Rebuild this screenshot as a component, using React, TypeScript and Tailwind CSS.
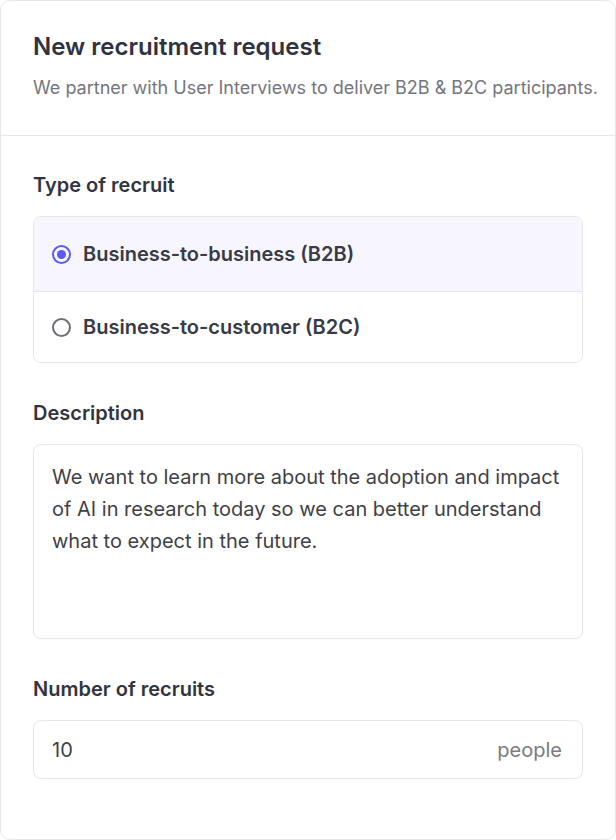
import { useState } from 'react'

const options = [
  { id: 'b2b', label: 'Business-to-business (B2B)' },
  { id: 'b2c', label: 'Business-to-customer (B2C)' },
]

function Radio({ checked }: { checked: boolean }) {
  if (checked) {
    return (
      <span className="flex h-[19px] w-[19px] shrink-0 items-center justify-center rounded-full border-2 border-[#5b5af6]">
        <span className="h-[9px] w-[9px] rounded-full bg-[#5b5af6]" />
      </span>
    )
  }
  return <span className="h-[19px] w-[19px] shrink-0 rounded-full border-2 border-[#6e6e76]" />
}

export default function App() {
  const [type, setType] = useState('b2b')

  return (
    <div className="min-h-screen bg-white font-['Inter',sans-serif] text-[#32343f]">
      <div className="w-[616px] h-[840px] rounded-[10px] border border-[#e6e6eb] bg-white flex flex-col">
        <header className="border-b border-[#e6e6eb] pl-[32px] pr-[12px] pt-[30px] pb-[33px]">
          <h1 className="text-[24px] leading-[32px] font-semibold text-[#2f3241]">New recruitment request</h1>
          <p className="mt-[11px] whitespace-nowrap text-[18px] leading-[28px] text-[#75757e]">
            We partner with User Interviews to deliver B2B &amp; B2C participants.
          </p>
        </header>

        <main className="flex flex-col px-[32px] pt-[35px]">
          <label className="text-[20px] leading-[28px] font-semibold">Type of recruit</label>
          <div className="mt-[17px] overflow-hidden rounded-[8px] border border-[#e6e6eb]">
            {options.map((o, i) => (
              <button
                key={o.id}
                onClick={() => setType(o.id)}
                className={`flex w-full items-center gap-[12px] px-[18px] text-left ${
                  i === 0 ? 'h-[75px] border-b border-[#e6e6eb]' : 'h-[70px]'
                } ${type === o.id ? 'bg-[#f7f6fe]' : 'bg-white'}`}
              >
                <Radio checked={type === o.id} />
                <span className="text-[20px] leading-[28px] font-semibold text-[#383a46]">{o.label}</span>
              </button>
            ))}
          </div>

          <label className="mt-[36px] text-[20px] leading-[28px] font-semibold">Description</label>
          <div className="mt-[17px] h-[195px] rounded-[8px] border border-[#e6e6eb] pl-[18px] pr-[10px] pt-[16px] text-[20px] leading-[32px] text-[#3f3f48]">
            We want to learn more about the adoption and impact of AI in research today so we can better understand
            what to expect in the future.
          </div>

          <label className="mt-[36px] text-[20px] leading-[28px] font-semibold">Number of recruits</label>
          <div className="mt-[17px] flex h-[59px] items-center justify-between rounded-[8px] border border-[#e6e6eb] pl-[18px] pr-[20px] text-[20px]">
            <span className="text-[#3f3f48]">10</span>
            <span className="text-[#7a7a83]">people</span>
          </div>
        </main>
      </div>
    </div>
  )
}
